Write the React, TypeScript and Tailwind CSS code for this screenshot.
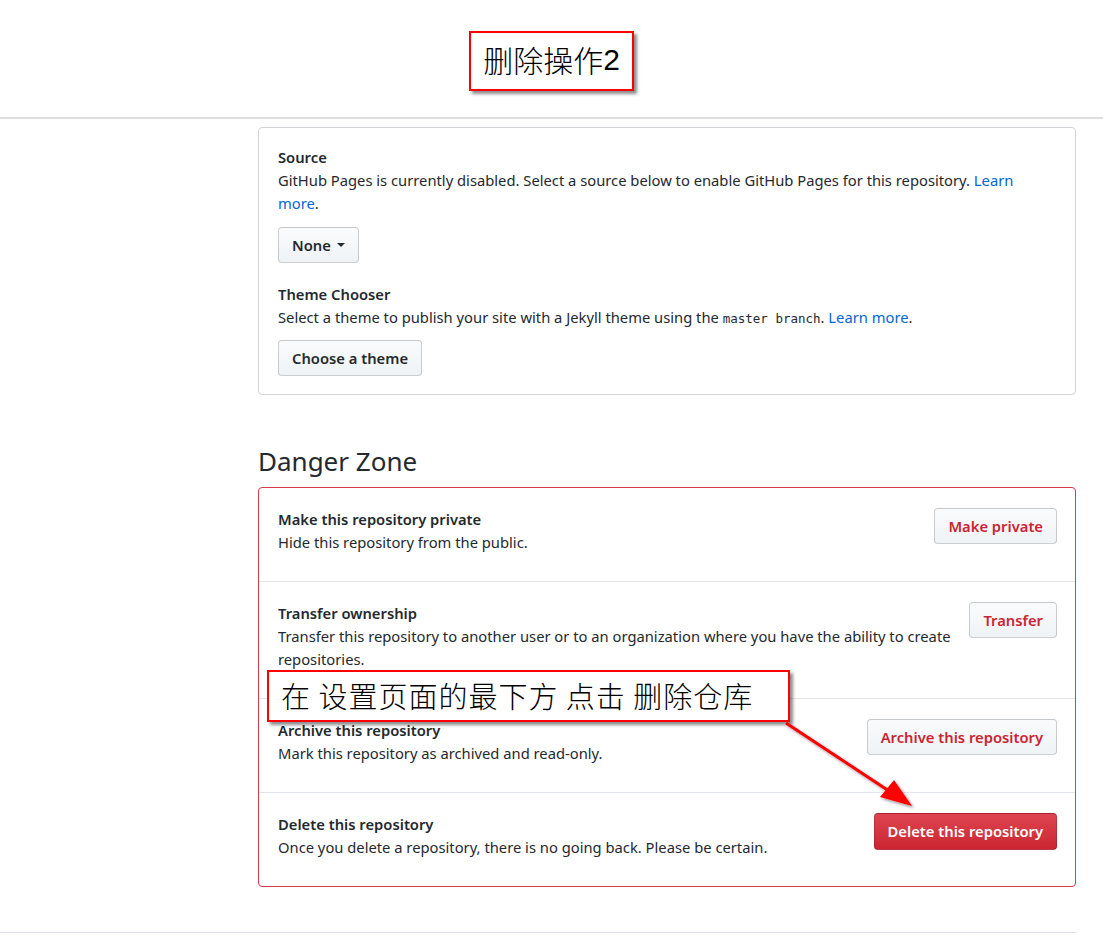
import React from "react";

const font = { fontFamily: '"Noto Sans", "Liberation Sans", sans-serif' };

const btn =
  "shrink-0 h-[36px] px-[13px] rounded-[4px] border border-[#1b1f2333] bg-gradient-to-b from-[#fafbfc] to-[#eff3f6] text-[14.75px] font-semibold leading-none";

const rows = [
  {
    title: "Make this repository private",
    desc: "Hide this repository from the public.",
    action: "Make private",
  },
  {
    title: "Transfer ownership",
    desc: "Transfer this repository to another user or to an organization where you have the ability to create repositories.",
    action: "Transfer",
  },
  {
    title: "Archive this repository",
    desc: "Mark this repository as archived and read-only.",
    action: "Archive this repository",
  },
  {
    title: "Delete this repository",
    desc: "Once you delete a repository, there is no going back. Please be certain.",
    action: "Delete this repository",
    danger: true,
  },
];

const App: React.FC = () => {
  return (
    <div className="relative w-[1103px] h-[946px] bg-white text-[#24292e] overflow-hidden" style={font}>
      <div className="h-[119px] border-b-2 border-[#dddddd]" />

      <div className="ml-[258px] w-[818px] pt-[8px]">
        <div className="rounded-[4px] border border-[#d1d5da] px-[19px] pt-[18px] pb-[18px] text-[14.75px] leading-[23px]">
          <div className="font-semibold">Source</div>
          <p>
            GitHub Pages is currently disabled. Select a source below to enable GitHub Pages for this repository.{" "}
            <span className="text-[#0366d6]">Learn more</span>.
          </p>
          <button className={`${btn} mt-[12px] text-[#24292e] flex items-center gap-[6px]`}>
            None
            <span className="w-0 h-0 border-x-[4px] border-x-transparent border-t-[4px] border-t-[#24292e]" />
          </button>

          <div className="font-semibold mt-[20px]">Theme Chooser</div>
          <p>
            Select a theme to publish your site with a Jekyll theme using the{" "}
            <code className="text-[12.5px]" style={{ fontFamily: '"DejaVu Sans Mono", monospace' }}>
              master branch
            </code>
            . <span className="text-[#0366d6]">Learn more</span>.
          </p>
          <button className={`${btn} mt-[10px] text-[#24292e]`}>Choose a theme</button>
        </div>

        <h2 className="mt-[49px] mb-[9px] text-[26px] leading-[34px] font-normal">Danger Zone</h2>

        <div className="rounded-[4px] border border-[#d73a49] text-[14.75px] leading-[23px]">
          {rows.map((r, i) => (
            <div
              key={i}
              className={`flex items-start gap-[12px] pl-[19px] pr-[18px] pt-[20px] pb-[27px] ${
                i > 0 ? "border-t border-[#e1e4e8]" : ""
              }`}
            >
              <div className="flex-1">
                <div className="font-semibold">{r.title}</div>
                <p>{r.desc}</p>
              </div>
              <button
                className={
                  r.danger
                    ? "shrink-0 h-[37px] px-[13px] rounded-[4px] border border-[#1b1f2333] bg-gradient-to-b from-[#de4450] to-[#cb2431] text-white text-[14.75px] font-semibold leading-none"
                    : `${btn} text-[#cb2431]`
                }
              >
                {r.action}
              </button>
            </div>
          ))}
        </div>
      </div>

      <div className="mt-[45px] w-[1077px] border-t border-[#e1e4e8]" />

      {/* annotations */}
      <div
        className="absolute left-[469px] top-[31px] w-[165px] h-[60px] border-2 border-[#ff0000] bg-white shadow-[3px_3px_3px_rgba(0,0,0,0.45)] flex items-center justify-center pb-[4px] text-[30px] text-black"
        style={{ fontFamily: '"Noto Sans CJK SC", sans-serif' }}
      >
        <span className="font-light">删除操作</span>
        <span className="font-medium" style={{ fontFamily: '"Liberation Sans", sans-serif' }}>
          2
        </span>
      </div>

      <div
        className="absolute left-[267px] top-[670px] w-[523px] h-[52px] border-2 border-[#ff0000] bg-white shadow-[3px_3px_3px_rgba(0,0,0,0.45)] flex items-center pl-[12px] text-[29px] tracking-[1px] font-light text-black whitespace-pre"
        style={{ fontFamily: '"Noto Sans CJK SC", sans-serif' }}
      >
        在 设置页面的最下方 点击 删除仓库
      </div>

      <svg className="absolute left-0 top-0 pointer-events-none" width="1103" height="946">
        <defs>
          <filter id="sh" x="-20%" y="-20%" width="140%" height="140%">
            <feDropShadow dx="2" dy="2" stdDeviation="1.5" floodColor="#000" floodOpacity="0.4" />
          </filter>
        </defs>
        <g filter="url(#sh)">
          <line x1="786" y1="723" x2="892" y2="793" stroke="#ff0000" strokeWidth="3" />
          <polygon points="912,806 880,797 894,780" fill="#ff0000" />
        </g>
      </svg>
    </div>
  );
};

export default App;
